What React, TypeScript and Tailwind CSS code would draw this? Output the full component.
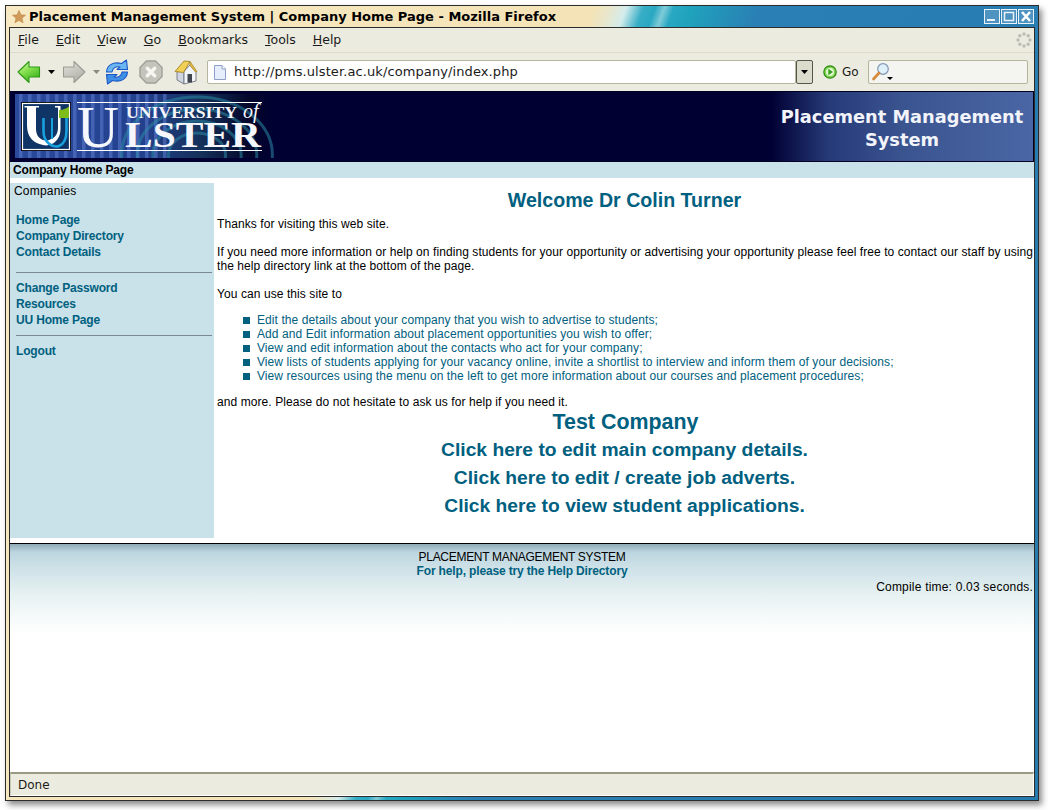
const sans = "font-['Liberation_Sans',Arial,sans-serif]";

function FavStar() {
  return (
    <svg width="14" height="14" viewBox="0 0 14 14" className="shrink-0">
      <path d="M7 0.5 L8.9 4.8 L13.5 5.2 L10 8.2 L11.1 12.8 L7 10.4 L2.9 12.8 L4 8.2 L0.5 5.2 L5.1 4.8 Z" fill="#d29a58" stroke="#b98648" strokeWidth="0.6" />
    </svg>
  );
}

function WinButton({ kind }: { kind: "min" | "max" | "close" }) {
  return (
    <div className="w-[16px] h-[15px] border border-[#e8f2f8] bg-[#4f93c0] flex items-center justify-center">
      <svg width="14" height="13" viewBox="0 0 14 13">
        {kind === "min" && <rect x="2" y="9" width="8" height="2" fill="#e8f2f8" />}
        {kind === "max" && <rect x="2.5" y="2.5" width="9" height="8" fill="none" stroke="#e8f2f8" strokeWidth="1.5" />}
        {kind === "close" && <path d="M3 2 L11 11 M11 2 L3 11" stroke="#ffffff" strokeWidth="2.6" />}
      </svg>
    </div>
  );
}

function BackIcon() {
  return (
    <svg width="24" height="24" viewBox="0 0 24 24">
      <defs>
        <linearGradient id="bk" x1="0" y1="0" x2="0.6" y2="1">
          <stop offset="0" stopColor="#e6fcb0" />
          <stop offset="0.5" stopColor="#86e04e" />
          <stop offset="1" stopColor="#39b21f" />
        </linearGradient>
      </defs>
      <path d="M1 12 L12 1.5 L12 7 L22.5 7 L22.5 17 L12 17 L12 22.5 Z" fill="url(#bk)" stroke="#2f9a18" strokeWidth="1.1" strokeLinejoin="round" />
    </svg>
  );
}

function ForwardIcon() {
  return (
    <svg width="24" height="24" viewBox="0 0 24 24">
      <defs>
        <linearGradient id="fw" x1="0" y1="0" x2="0.6" y2="1">
          <stop offset="0" stopColor="#e4e4de" />
          <stop offset="1" stopColor="#b0b0a8" />
        </linearGradient>
      </defs>
      <path d="M23 12 L12 1.5 L12 7 L1.5 7 L1.5 17 L12 17 L12 22.5 Z" fill="url(#fw)" stroke="#9c9c94" strokeWidth="1.1" strokeLinejoin="round" />
    </svg>
  );
}

function Caret({ color }: { color: string }) {
  return (
    <svg width="7" height="4" viewBox="0 0 7 4" className="shrink-0">
      <path d="M0 0 H7 L3.5 4 Z" fill={color} />
    </svg>
  );
}

function ReloadIcon() {
  return (
    <svg width="24" height="26" viewBox="0 0 24 26">
      <path d="M1.5 13 C2 6 8 2.5 16.5 4.5 L21.5 1 L22.5 10.5 L12 10.5 L15 8 C11 7 7.5 9 7 13 Z" fill="#6cb6f2" stroke="#1a57c8" strokeWidth="1.1" strokeLinejoin="round" />
      <path d="M22.5 13 C22 20 16 23.5 7.5 21.5 L2.5 25 L1.5 15.5 L12 15.5 L9 18 C13 19 16.5 17 17 13 Z" fill="#3f90e4" stroke="#1a57c8" strokeWidth="1.1" strokeLinejoin="round" />
    </svg>
  );
}

function StopIcon() {
  return (
    <svg width="24" height="24" viewBox="0 0 24 24">
      <path d="M7.5 1 H16.5 L23 7.5 V16.5 L16.5 23 H7.5 L1 16.5 V7.5 Z" fill="#c4c4bc" stroke="#a0a098" strokeWidth="1.4" />
      <path d="M8.3 8.3 L15.7 15.7 M15.7 8.3 L8.3 15.7" stroke="#f6f6f2" strokeWidth="3.4" strokeLinecap="round" />
    </svg>
  );
}

function HomeIcon() {
  return (
    <svg width="24" height="25" viewBox="0 0 24 25">
      <path d="M3 11.5 V20 L10 24 V11.5 Z" fill="#cfd6e2" stroke="#6f7480" strokeWidth="0.9" />
      <path d="M10 24 V11.5 L16 5 L22 11.5 V21 Z" fill="#f2f5f8" stroke="#6f7480" strokeWidth="0.9" />
      <rect x="13.5" y="14" width="4.5" height="8.5" fill="#3f4650" />
      <path d="M1 11.5 L10 1 L16 1.5 L9.5 12.5 Z" fill="#f2cf55" stroke="#a38528" strokeWidth="0.9" strokeLinejoin="round" />
      <path d="M16 1.5 L23 11.5 L21.5 12 L16 5.5 Z" fill="#e0b93e" stroke="#a38528" strokeWidth="0.7" />
    </svg>
  );
}

function PageIcon() {
  return (
    <svg width="12" height="15" viewBox="0 0 12 15" className="shrink-0">
      <path d="M0.5 0.5 H8 L11.5 4 V14.5 H0.5 Z" fill="#e6edfb" stroke="#8f9fca" />
      <path d="M8 0.5 V4 H11.5" fill="#ffffff" stroke="#8f9fca" />
    </svg>
  );
}

function Throbber() {
  const pts = [[8, 2], [12.2, 3.8], [14, 8], [12.2, 12.2], [8, 14], [3.8, 12.2], [2, 8], [3.8, 3.8]];
  return (
    <svg width="16" height="16" viewBox="0 0 16 16">
      {pts.map(([x, y], i) => (
        <circle key={i} cx={x} cy={y} r="1.7" fill="#bdbdb7" />
      ))}
    </svg>
  );
}

function GoIcon() {
  return (
    <svg width="14" height="14" viewBox="0 0 14 14" className="shrink-0">
      <circle cx="7" cy="7" r="6.2" fill="#7fd44a" stroke="#2f8a1a" strokeWidth="1.2" />
      <circle cx="7" cy="7" r="4" fill="#e2f8d2" />
      <path d="M5.3 3.8 L10 7 L5.3 10.2 Z" fill="#37a020" />
    </svg>
  );
}

function SearchIcon() {
  return (
    <svg width="22" height="20" viewBox="0 0 22 20">
      <circle cx="11" cy="7" r="5.3" fill="#dff0fb" stroke="#7f96b0" strokeWidth="1.2" />
      <path d="M7 11 L1.5 17" stroke="#d48a3a" strokeWidth="2.6" strokeLinecap="round" />
      <path d="M15 15 H21 L18 18 Z" fill="#000000" />
    </svg>
  );
}

function UlsterLogo() {
  const stripes = [4, 13, 22, 31, 40, 49, 58, 67, 76, 85, 94, 103, 112, 121, 130, 139, 148];
  return (
    <svg width="262" height="69" viewBox="0 0 262 69" className="shrink-0 block">
      <defs>
        <linearGradient id="fade" x1="0" y1="0" x2="1" y2="0">
          <stop offset="0" stopColor="#2a4a9c" />
          <stop offset="0.5" stopColor="#23408c" />
          <stop offset="0.72" stopColor="#143058" />
          <stop offset="0.9" stopColor="#04062a" />
          <stop offset="1" stopColor="#000033" />
        </linearGradient>
      </defs>
      <rect x="0" y="1" width="260" height="64" fill="url(#fade)" />
      {stripes.map((x) => (
        <rect key={x} x={x} y="1" width="3.5" height="64" fill="#5c7cd0" opacity="0.55" />
      ))}
      {[22, 34, 46, 58].map((r) => (
        <ellipse key={r} cx="182" cy="62" rx={r * 1.3} ry={r} fill="none" stroke="#2a88a4" strokeWidth="3" opacity="0.55" />
      ))}
      <rect x="0" y="65" width="262" height="4" fill="#000033" />
      <rect x="6.5" y="9.5" width="49" height="48" fill="#0e3566" stroke="#000000" strokeWidth="1" />
      <rect x="7.5" y="10.5" width="47" height="46" fill="none" stroke="#ffffff" strokeWidth="1.2" />
      <path d="M9.5 13 H24 V14.5 H21 V36 C21 46 30 50 36 46 C41 44 43 40 43 34 V14.5 H40 V13 H45.5 V36 C45.5 48 36 54 28 52 C18 50 12 44 12 32 V14.5 H9.5 Z" fill="#ffffff" />
      <path d="M28.5 25 V38 C28.5 50 38 55 44 53 C49 51 51.5 46 51.5 38 V25" fill="none" stroke="#18a0dc" strokeWidth="2.6" />
      <path d="M37 25 V46" fill="none" stroke="#18a0dc" strokeWidth="2" />
      <path d="M44 25 V17 C49 17 52 15 54 13.5 V25 Z" fill="#7ebd1c" />
      <line x1="62" y1="9.5" x2="247" y2="9.5" stroke="#ffffff" strokeWidth="1" />
      <line x1="62" y1="57.5" x2="247" y2="57.5" stroke="#ffffff" strokeWidth="1" />
      <text x="62" y="54" fontFamily="'Liberation Serif',serif" fontSize="60" fill="#f6f7fc" textLength="42" lengthAdjust="spacingAndGlyphs">U</text>
      <text x="111" y="25" fontFamily="'Liberation Serif',serif" fontSize="17" fontWeight="700" fill="#f6f7fc" textLength="111" lengthAdjust="spacingAndGlyphs">UNIVERSITY</text>
      <text x="228" y="25" fontFamily="'Liberation Serif',serif" fontSize="20" fontStyle="italic" fill="#f6f7fc">of</text>
      <text x="110" y="54" fontFamily="'Liberation Serif',serif" fontSize="36" fontWeight="700" fill="#f6f7fc" textLength="136" lengthAdjust="spacingAndGlyphs">LSTER</text>
    </svg>
  );
}

const menus: [string, string][] = [
  ["F", "ile"],
  ["E", "dit"],
  ["V", "iew"],
  ["G", "o"],
  ["B", "ookmarks"],
  ["T", "ools"],
  ["H", "elp"],
];

const items = [
  "Edit the details about your company that you wish to advertise to students;",
  "Add and Edit information about placement opportunities you wish to offer;",
  "View and edit information about the contacts who act for your company;",
  "View lists of students applying for your vacancy online, invite a shortlist to interview and inform them of your decisions;",
  "View resources using the menu on the left to get more information about our courses and placement procedures;",
];

function SideLink({ children }: { children: string }) {
  return <div className="h-[16px] leading-[16px] pl-[6px] text-[12px] font-bold tracking-[-0.17px] text-[#006080]">{children}</div>;
}

function BigLink({ children, size }: { children: string; size: string }) {
  return <div className={`h-[28px] leading-[28px] text-center font-bold text-[#006080] ${size}`}>{children}</div>;
}

export default function App() {
  return (
    <div className="w-[1048px] h-[810px] bg-white overflow-hidden pl-[5px] pt-[5px]">
      <div className="w-[1034px] h-[796px] border border-[#2c2c2c] shadow-[3px_4px_6px_rgba(0,0,0,0.45)] flex flex-col bg-[linear-gradient(110deg,#f7e9c4_0%,#f4e3b6_44.5%,#e8e6cc_45.8%,#d4ecec_47%,#38aec6_48.3%,#2aa8c2_49.2%,#7fcbd8_49.9%,#2aa8c2_50.6%,#1fa2bc_52%,#2a80b4_57%,#257bae_100%)]">
        <div className="h-[21px] shrink-0 flex items-center pl-[6px] pr-[4px]">
          <FavStar />
          <span className="font-['DejaVu_Sans',sans-serif] font-bold text-[13px] text-black whitespace-nowrap ml-[3px]">
            Placement Management System | Company Home Page - Mozilla Firefox
          </span>
          <div className="ml-auto flex gap-[1px]">
            <WinButton kind="min" />
            <WinButton kind="max" />
            <WinButton kind="close" />
          </div>
        </div>

        <div className="flex-1 min-h-0 mx-[3px] mb-[3px] border border-[#2c2c2c] flex flex-col bg-white">
          <div className="h-[25px] shrink-0 bg-[#ecebdf] border-b border-[#dcdbc9] flex items-center pl-[8px] pr-[2px] gap-[17px] font-['DejaVu_Sans',sans-serif] text-[12.5px] text-[#1a1a1a]">
            {menus.map(([k, r]) => (
              <span key={k}>
                <span className="underline">{k}</span>
                {r}
              </span>
            ))}
            <div className="ml-auto">
              <Throbber />
            </div>
          </div>

          <div className="h-[38px] shrink-0 bg-[#ecebdf] flex items-center pl-[7px] font-['DejaVu_Sans',sans-serif] text-[12px] text-[#1a1a1a]">
            <BackIcon />
            <div className="ml-[7px]"><Caret color="#000000" /></div>
            <div className="ml-[7px]"><ForwardIcon /></div>
            <div className="ml-[7px]"><Caret color="#8a8a84" /></div>
            <div className="ml-[5px]"><ReloadIcon /></div>
            <div className="ml-[10px]"><StopIcon /></div>
            <div className="ml-[11px]"><HomeIcon /></div>
            <div className="ml-[9px] w-[589px] h-[24px] bg-white border border-[#b5b59c] rounded-[2px] flex items-center pl-[6px] gap-[8px]">
              <PageIcon />
              <span className="text-[13px] text-[#1a1a1a] tracking-[0.1px]">http://pms.ulster.ac.uk/company/index.php</span>
            </div>
            <div className="w-[17px] h-[24px] bg-[#dcdccc] border border-[#55554a] rounded-[2px] flex items-center justify-center">
              <Caret color="#000000" />
            </div>
            <div className="ml-[10px]"><GoIcon /></div>
            <span className="ml-[5px]">Go</span>
            <div className="ml-[9px] w-[160px] h-[24px] bg-[#f4f4f0] border border-[#b5b59c] rounded-[2px] flex items-center pl-[3px]">
              <SearchIcon />
            </div>
          </div>

          <div className={`flex-1 min-h-0 flex flex-col bg-white text-black ${sans}`}>
            <div className="h-[71px] shrink-0 flex border-y border-[#000022] border-r bg-[#000033]">
              <div className="pl-[5px] pt-[1px]">
                <UlsterLogo />
              </div>
              <div className="ml-auto w-[262px] pt-[3px] flex flex-col items-center justify-center bg-[linear-gradient(90deg,#000033_0%,#263a78_22%,#3a5490_50%,#4a66a4_100%)] font-['DejaVu_Sans',sans-serif] font-bold text-[17.8px] leading-[23px] text-[#f2f4fa] text-center">
                <div>Placement Management</div>
                <div>System</div>
              </div>
            </div>

            <div className="h-[16px] shrink-0 bg-[#c9e1e8] pl-[3px] text-[12px] leading-[16px] font-bold tracking-[-0.17px]">Company Home Page</div>

            <div className="h-[365px] shrink-0 flex pt-[5px] pb-[5px]">
              <div className="w-[204px] shrink-0 bg-[#c9e1e8] pt-[1px]">
                <div className="h-[14px] leading-[14px] pl-[4px] text-[12px] tracking-[0.2px]">Companies</div>
                <div className="h-[14px]" />
                <SideLink>Home Page</SideLink>
                <SideLink>Company Directory</SideLink>
                <SideLink>Contact Details</SideLink>
                <div className="h-px bg-[#7a8a90] ml-[6px] mr-[2px] mt-[12px] mb-[7px]" />
                <SideLink>Change Password</SideLink>
                <SideLink>Resources</SideLink>
                <SideLink>UU Home Page</SideLink>
                <div className="h-px bg-[#7a8a90] ml-[6px] mr-[2px] mt-[7px] mb-[7px]" />
                <SideLink>Logout</SideLink>
              </div>
              <div className="flex-1 min-w-0 pl-[3px] text-[12px] leading-[14px] tracking-[0.08px] -mt-[1px]">
                <div className="h-[35px] leading-[37px] pr-[2px] text-center text-[19.6px] font-bold tracking-normal text-[#006080]">Welcome Dr Colin Turner</div>
                <p>Thanks for visiting this web site.</p>
                <p className="mt-[14px]">
                  If you need more information or help on finding students for your opportunity or advertising your opportunity please feel free to contact our staff by using the help directory link at the bottom of the page.
                </p>
                <p className="mt-[14px]">You can use this site to</p>
                <ul className="mt-[12px] pl-[26px] list-none">
                  {items.map((t) => (
                    <li key={t} className="flex items-center h-[14px] text-[#006080]">
                      <span className="w-[7px] h-[7px] bg-[#006080] shrink-0 mr-[7px]" />
                      <span className="whitespace-nowrap">{t}</span>
                    </li>
                  ))}
                </ul>
                <p className="mt-[12px]">and more. Please do not hesitate to ask us for help if you need it.</p>
                <div className="-mt-[1px] tracking-normal">
                  <BigLink size="text-[21.4px]">Test Company</BigLink>
                  <BigLink size="text-[19.25px] pr-[2px]">Click here to edit main company details.</BigLink>
                  <BigLink size="text-[19.25px] pr-[2px]">Click here to edit / create job adverts.</BigLink>
                  <BigLink size="text-[19.25px] pr-[2px]">Click here to view student applications.</BigLink>
                </div>
              </div>
            </div>

            <div className="flex-1 min-h-0 border-t border-black bg-[linear-gradient(180deg,#8fabb5_0px,#bcd5df_8px,#cfe2e8_25px,#e8f2f2_52px,#fbfdfd_82px,#ffffff_92px)] text-[12px] leading-[14px]">
              <div className="text-center pt-[6px] tracking-[-0.3px]">PLACEMENT MANAGEMENT SYSTEM</div>
              <div className="text-center font-bold text-[#006080] tracking-[-0.15px]">For help, please try the Help Directory</div>
              <div className="text-right pr-[1px] pt-[2px] tracking-[0.2px]">Compile time: 0.03 seconds.</div>
            </div>
          </div>

          <div className="h-[24px] shrink-0 bg-[#ecebdf] border-t-2 border-t-[#9a9a84] border-b border-b-white border-r border-r-white border-l border-l-[#c8c8b8] flex items-center pl-[7px] font-['DejaVu_Sans',sans-serif] text-[12px] text-[#1a1a1a]">
            Done
          </div>
        </div>
      </div>
    </div>
  );
}
